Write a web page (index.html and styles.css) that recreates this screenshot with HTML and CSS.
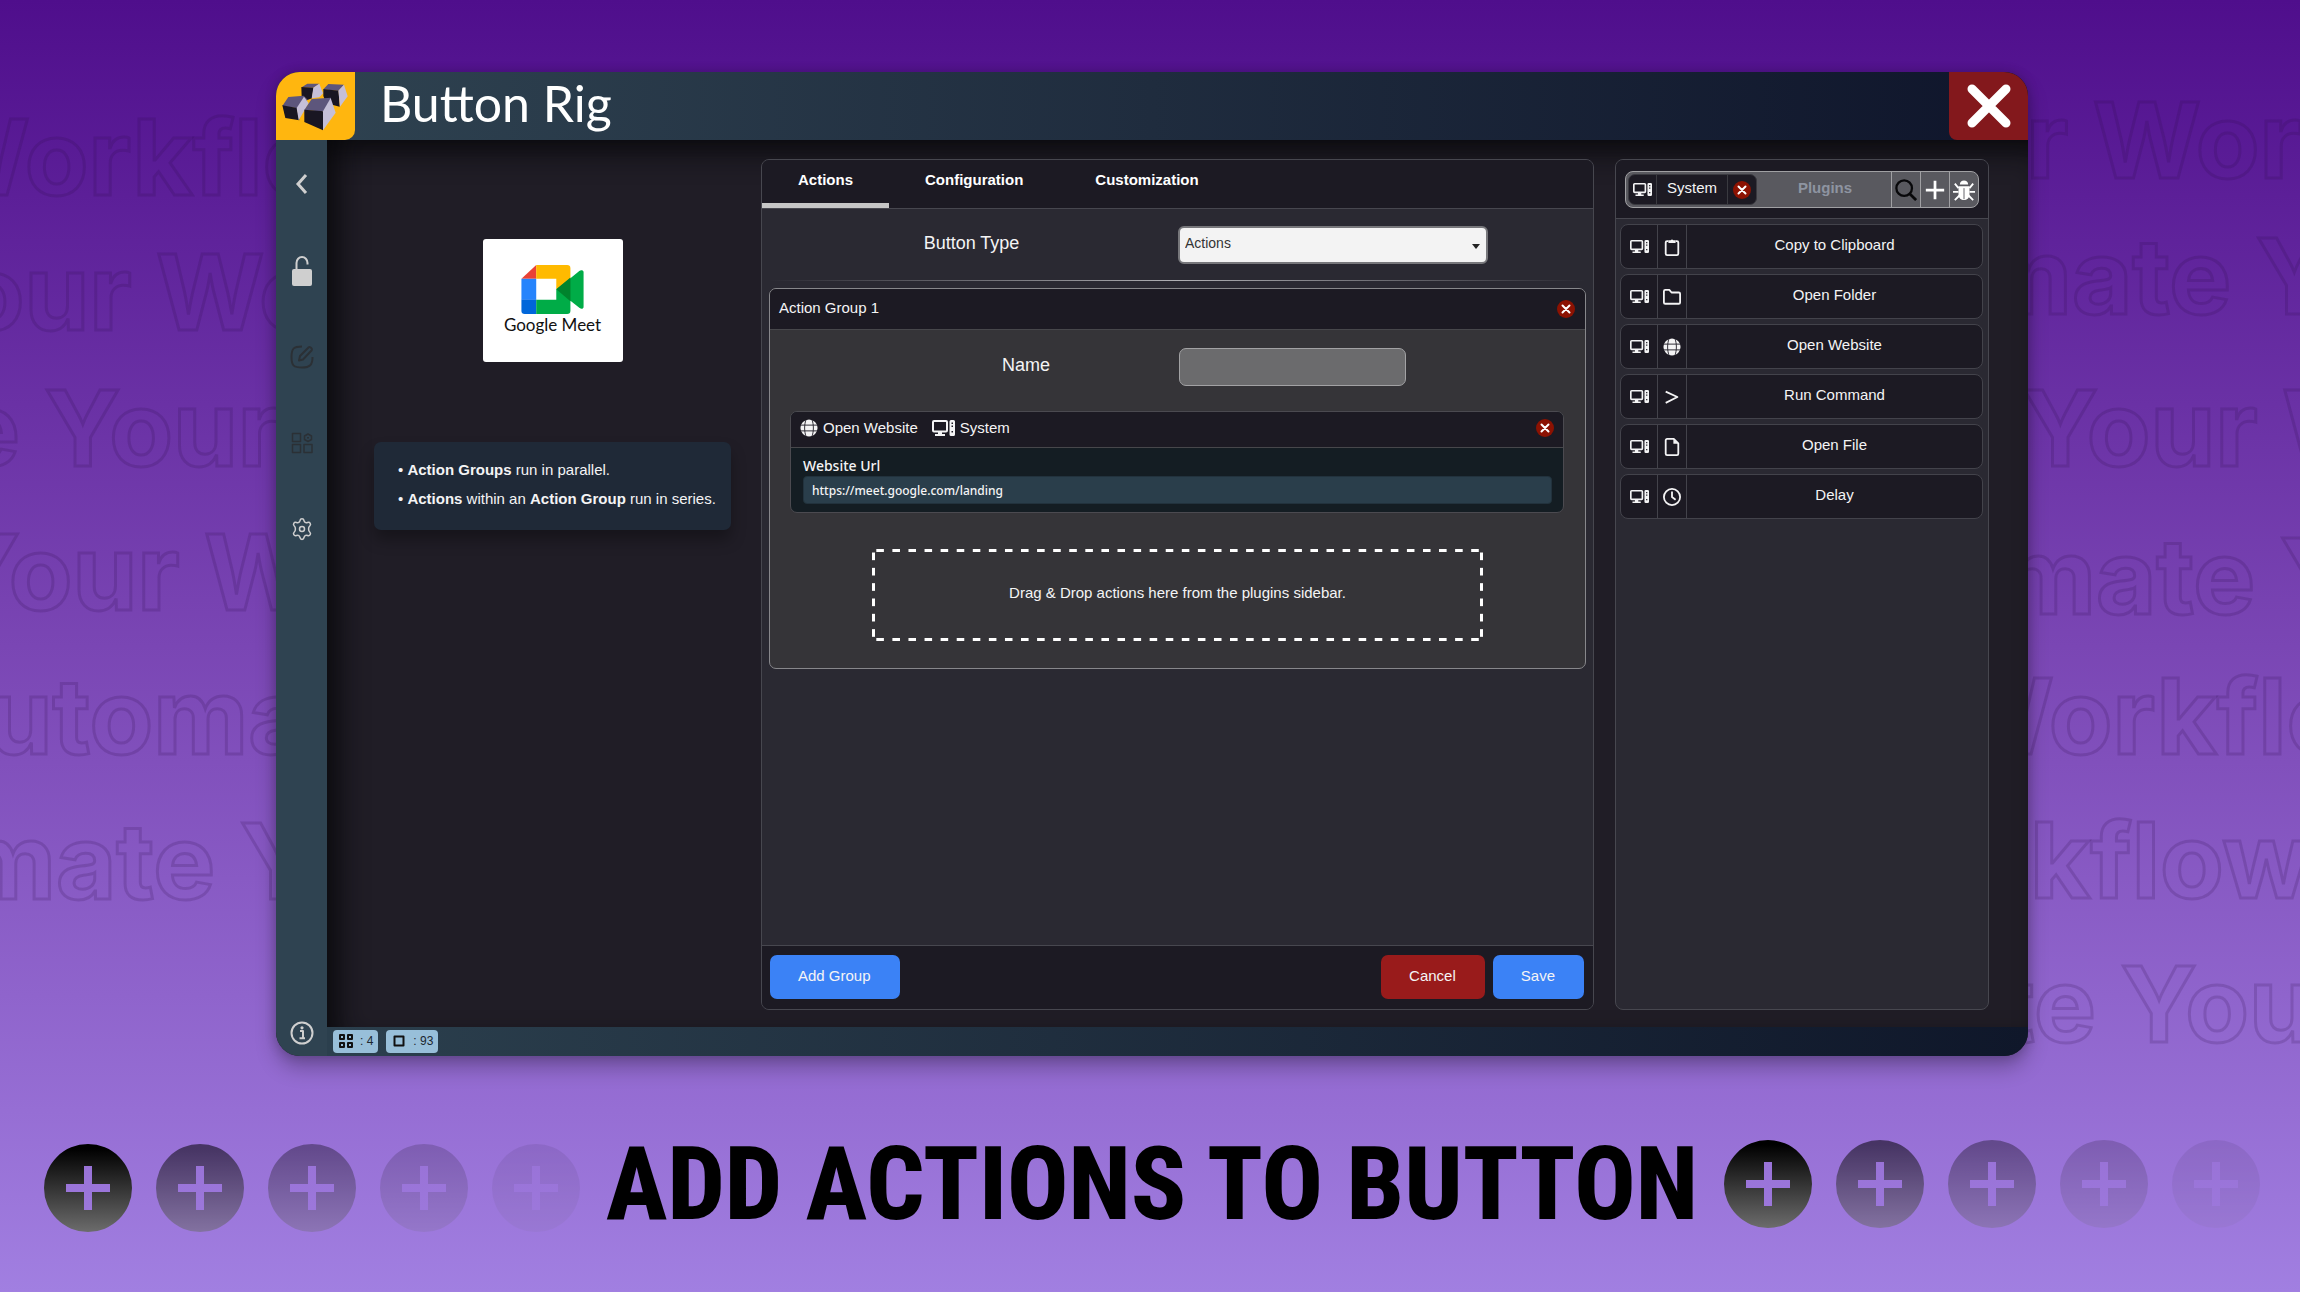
FILE: index.html
```html
<!DOCTYPE html>
<html lang="en">
<head>
<meta charset="utf-8">
<title>Button Rig</title>
<link rel="stylesheet" href="styles.css">
</head>
<body>
<svg class="sprite" aria-hidden="true">
  <symbol id="pc" viewBox="0 0 23 18">
    <rect x="1" y="2" width="14" height="10.500" rx="1" fill="none" stroke="currentColor" stroke-width="2"/>
    <path d="M6 12h4v3.500H6zM3 15h10v2H3z" fill="currentColor"/>
    <path fill-rule="evenodd" fill="currentColor" d="M19 1h2.500a1.500 1.500 0 0 1 1.500 1.500v13a1.500 1.500 0 0 1-1.500 1.500H19a1.500 1.500 0 0 1-1.500-1.500v-13A1.500 1.500 0 0 1 19 1zM19.500 3.500v1.500H21V3.500zM19.500 6.500V8H21V6.500zM19.500 12v1.500H21V12z"/>
  </symbol>
  <symbol id="globe" viewBox="0 0 20 20">
    <circle cx="10" cy="10" r="9.500" fill="currentColor"/>
    <path d="M0 6.800h20M0 13.200h20M7 0C4.500 6 4.500 14 7 20M13 0c2.500 6 2.500 14 0 20" fill="none" stroke="#1c1a23" stroke-width="1"/>
  </symbol>
  <symbol id="close" viewBox="0 0 18 18">
    <circle cx="9" cy="9" r="9" fill="#8c1202"/>
    <path d="M5.500 5.500l7 7M12.500 5.500l-7 7" stroke="#fff" stroke-width="2" stroke-linecap="round"/>
  </symbol>
  <symbol id="plusdot" viewBox="0 0 88 88">
    <linearGradient id="fade" x1="0" y1="0" x2="0" y2="1"><stop offset="0.050" stop-color="#000"/><stop offset="1" stop-color="#6c6c6c"/></linearGradient>
    <path fill="url(#fade)" fill-rule="evenodd" d="M44 0a44 44 0 1 1 0 88a44 44 0 1 1 0-88zM40 22v18H22v8h18v18h8V48h18v-8H48V22z"/>
  </symbol>
</svg>

<svg class="backdrop backdrop-left" aria-hidden="true">
  <text x="-78" y="195">Workflow</text>
  <text x="-104" y="330">Your Wo</text>
  <text x="-42" y="466">e Your</text>
  <text x="-56" y="610">Your W</text>
  <text x="-90" y="754">Automa</text>
  <text x="-39" y="899">mate Y</text>
</svg>
<svg class="backdrop backdrop-right" aria-hidden="true">
  <text x="26" y="178">r Work</text>
  <text x="-23" y="314">mate Y</text>
  <text x="22" y="466">Your W</text>
  <text x="1" y="614">mate Y</text>
  <text x="-54" y="754">Workflow</text>
  <text x="-14" y="898">rkflow</text>
  <text x="-3" y="1042">te Your</text>
</svg>

<div class="window">
  <header class="titlebar">
    <svg class="logo" viewBox="0 0 237 204" aria-hidden="true">
      <g transform="translate(-48 -66)">
        <path fill="#5d567c" d="M125 112l17-11h36l-18 12zM190 118l15-16 47 2-17 19z"/>
        <path fill="#191622" d="M124 111l37 2-5 32-20 7-11-12zM190 117l46 5 3 48-40-10-9-22z"/>
        <path fill="#c5bfd8" d="M160 113l18-12 11 29-11 12-23 3zM235 122l17-18 11 35-23 31z"/>
        <path fill="#5d567c" d="M67 168l18-27 46-4 12 12-32 26z"/>
        <path fill="#191622" d="M67 166l44 8 7 37-42-7z"/>
        <path fill="#c5bfd8" d="M110 174l22-34 14 20-30 51z"/>
        <path fill="#5d567c" d="M133 180l22-33 58-4-6 20-16 22z"/>
        <path fill="#191622" d="M133 179l58 5-2 57-56-25z"/>
        <path fill="#c5bfd8" d="M189 184l23-40 15 44-38 53z"/>
      </g>
    </svg>
    <h1>Button Rig</h1>
    <button class="window-close" aria-label="Close window"><svg viewBox="0 0 44 44"><path d="M5 5l34 34M39 5L5 39" stroke="#fff" stroke-width="9" stroke-linecap="round"/></svg></button>
  </header>

  <nav class="sidebar">
    <button aria-label="Back"><svg viewBox="0 0 24 24"><path d="M16 3l-8 9 8 9" class="line bold"/></svg></button>
    <button aria-label="Unlock"><svg class="tall" viewBox="0 0 22 32"><path d="M5.500 14V8a5.500 6 0 0 1 11 0v1.500" class="line"/><rect x="1" y="14" width="20" height="17" rx="2" fill="currentColor"/></svg></button>
    <button aria-label="Edit" disabled><svg viewBox="0 0 24 24"><path d="M12 1.500C4 1.500 1.500 3 1.500 12S4 22.500 12 22.500 22.500 20 22.500 12M9 15.500l1-4.500 8.500-8.500c1.500-1.500 4.500 1.500 3 3L13 14.500z" class="line"/></svg></button>
    <button aria-label="Widgets" disabled><svg viewBox="0 0 24 24"><path d="M2.500 2.500h8v8h-8zM2.500 13.500h8v8h-8zM14 13.500h8v8h-8zM18 3l3.500 2v3.500L18 10.500 14.500 8.500V5zM17 6.800h2" class="line thin"/></svg></button>
    <button aria-label="Settings"><svg viewBox="0 0 24 24"><path d="M10 3.500c.5-2.500 3.500-2.500 4 0 .5 2 1.500 2.600 3.500 2 2.500-.8 4 1.800 2.200 3.500-1.500 1.300-1.500 4.700 0 6 1.800 1.700.3 4.300-2.200 3.500-2-.6-3 0-3.500 2-.5 2.500-3.500 2.500-4 0-.5-2-1.500-2.600-3.500-2-2.500.8-4-1.800-2.200-3.500 1.500-1.300 1.500-4.700 0-6C2.500 7.300 4 4.700 6.500 5.500c2 .6 3 0 3.500-2z" class="line thin"/><circle cx="12" cy="12" r="2.500" class="line thin"/></svg></button>
    <button class="about" aria-label="About"><svg viewBox="0 0 24 24"><circle cx="12" cy="12" r="10.500" class="line"/><path d="M10 10h3v7M9.500 17.200h5.500" class="line"/><circle cx="12" cy="6.800" r="1.600" fill="currentColor"/></svg></button>
  </nav>

  <main class="workspace">
    <section class="preview">
      <div class="tile">
        <svg viewBox="0 0 189 149" aria-hidden="true">
          <path fill="#e94235" d="M0 42L45 0v42z"/><path fill="#2684fc" d="M0 42h45v64H0z"/>
          <path fill="#0066da" d="M0 106h45v43H10a10 10 0 0 1-10-10z"/>
          <path fill="#ffba00" d="M45 0h94a10 10 0 0 1 10 10v40l-43 24V42H45z"/>
          <path fill="#00ac47" d="M45 106h61V74l43-34 27-22c5-4 13-2 13 3v106c0 7-7 8-12 4l-28-22v30a10 10 0 0 1-10 10H45z"/>
          <path fill="#00832d" d="M106 74l43-36v72z"/>
        </svg>
        <span>Google Meet</span>
      </div>
      <ul class="tips">
        <li><b>Action Groups</b> run in parallel.</li>
        <li><b>Actions</b> within an <b>Action Group</b> run in series.</li>
      </ul>
    </section>

    <form class="panel editor">
      <div class="tabs">
        <button type="button" class="active">Actions</button>
        <button type="button">Configuration</button>
        <button type="button">Customization</button>
      </div>
      <div class="editor-body">
        <div class="field type-field">
          <label for="type">Button Type</label>
          <div class="select"><select id="type"><option>Actions</option></select><svg viewBox="0 0 8 6" aria-hidden="true"><path d="M0 1h8L4 6z"/></svg></div>
        </div>
        <hr>
        <section class="group">
          <header><h2>Action Group 1</h2><button type="button" class="remove" aria-label="Remove group"><svg><use href="#close"/></svg></button></header>
          <div class="field name-field"><label for="name">Name</label><input id="name" type="text"></div>
          <article class="action">
            <header>
              <svg class="globe"><use href="#globe"/></svg><span>Open Website</span>
              <svg class="pc"><use href="#pc"/></svg><span>System</span>
              <button type="button" class="remove" aria-label="Remove action"><svg><use href="#close"/></svg></button>
            </header>
            <div class="action-body"><label for="url">Website Url</label><input id="url" type="text" value="https://meet.google.com/landing"></div>
          </article>
          <p class="drop">Drag &amp; Drop actions here from the plugins sidebar.</p>
        </section>
      </div>
      <footer><button type="button">Add Group</button><button type="button" class="danger">Cancel</button><button type="button">Save</button></footer>
    </form>

    <aside class="panel plugins">
      <div class="filter">
        <div class="search">
          <div class="chip"><span class="cell"><svg class="pc"><use href="#pc"/></svg></span><span class="chip-name">System</span><button class="remove" aria-label="Clear System filter"><svg><use href="#close"/></svg></button></div>
          <input type="text" placeholder="Plugins" aria-label="Plugins">
          <button aria-label="Search"><svg viewBox="0 0 24 24"><circle cx="10" cy="10" r="8.500" fill="none" stroke="#08080a" stroke-width="2.500"/><path d="M16 16l7 7" stroke="#08080a" stroke-width="3"/></svg></button>
          <button aria-label="Add plugin"><svg viewBox="0 0 24 24"><path d="M12 2v20M2 12h20" stroke="#fff" stroke-width="3"/></svg></button>
          <button aria-label="Debug"><svg viewBox="0 0 24 24"><path d="M7.500 6a4.500 4.500 0 0 1 9 0zM6 8h12v9c0 8-12 8-12 0z" fill="#fff"/><path d="M6 10L2 5M18 10l4-5M6 14H0M18 14h6M7 18l-5 5M17 18l5 5" stroke="#fff" stroke-width="2"/><path d="M12 10v12" stroke="#59595f"/></svg></button>
        </div>
      </div>
      <ul class="plugin-list">
        <li><span><svg class="pc"><use href="#pc"/></svg></span><span><svg viewBox="0 0 20 20"><path d="M6 3.500H4.500A1.500 1.500 0 0 0 3 5v12.500A1.500 1.500 0 0 0 4.500 19h11a1.500 1.500 0 0 0 1.500-1.500V5a1.500 1.500 0 0 0-1.500-1.500H14" class="line"/><path d="M6 5.500V2.500h2.500a2 2 0 0 1 3 0H14v3z" fill="currentColor"/></svg></span><span>Copy to Clipboard</span></li>
        <li><span><svg class="pc"><use href="#pc"/></svg></span><span><svg viewBox="0 0 20 20"><path d="M1 16V3.500A1.500 1.500 0 0 1 2.500 2H7l2.500 3h8A1.500 1.500 0 0 1 19 6.500V16a1.500 1.500 0 0 1-1.500 1.500h-15A1.500 1.500 0 0 1 1 16z" class="line"/></svg></span><span>Open Folder</span></li>
        <li><span><svg class="pc"><use href="#pc"/></svg></span><span><svg><use href="#globe"/></svg></span><span>Open Website</span></li>
        <li><span><svg class="pc"><use href="#pc"/></svg></span><span><svg viewBox="0 0 20 20"><path d="M3 4l13 6-13 6.500" class="line"/></svg></span><span>Run Command</span></li>
        <li><span><svg class="pc"><use href="#pc"/></svg></span><span><svg viewBox="0 0 20 20"><path d="M12 1H4.500A1.500 1.500 0 0 0 3 2.500v15A1.500 1.500 0 0 0 4.500 19h11a1.500 1.500 0 0 0 1.500-1.500V6z" class="line"/><path d="M11.500 1l5.500 5.500h-5.500z" fill="currentColor"/></svg></span><span>Open File</span></li>
        <li><span><svg class="pc"><use href="#pc"/></svg></span><span><svg viewBox="0 0 20 20"><circle cx="10" cy="10" r="9" class="line"/><path d="M10 4v6l4 3" class="line"/></svg></span><span>Delay</span></li>
      </ul>
    </aside>
  </main>

  <footer class="statusbar">
    <span class="stat"><svg viewBox="0 0 14 14"><path d="M1 1h4v4H1zM9 1h4v4H9zM1 9h4v4H1zM9 9h4v4H9z" class="line"/></svg> : 4</span>
    <span class="stat"><svg viewBox="0 0 14 14"><path d="M2.500 2.500h9v9h-9z" class="line"/></svg> : 93</span>
  </footer>
</div>

<footer class="banner">
  <div class="dots lowered" aria-hidden="true"><svg><use href="#plusdot"/></svg><svg><use href="#plusdot"/></svg><svg><use href="#plusdot"/></svg><svg><use href="#plusdot"/></svg><svg><use href="#plusdot"/></svg></div>
  <p class="headline">ADD ACTIONS TO BUTTON</p>
  <div class="dots" aria-hidden="true"><svg><use href="#plusdot"/></svg><svg><use href="#plusdot"/></svg><svg><use href="#plusdot"/></svg><svg><use href="#plusdot"/></svg><svg><use href="#plusdot"/></svg></div>
</footer>
</body>
</html>
```
FILE: styles.css
```css
* { box-sizing: border-box; }
body {
  margin: 0;
  min-height: 100vh;
  display: flex;
  flex-direction: column;
  position: relative;
  overflow-x: hidden;
  background: linear-gradient(#4f0e8c, #7a46b4 50%, #966ed4 86%, #a17fe1);
  color: #f4f4f5;
  font: 15px/20px "Liberation Sans", Arial, sans-serif;
}
button, input, select { font: inherit; color: inherit; border: 0; margin: 0; padding: 0; background: none; min-width: 0; }
h1, h2, p, ul { margin: 0; padding: 0; font-weight: 400; list-style: none; }
svg { display: block; flex: none; }
.sprite { position: absolute; width: 0; height: 0; }
.line { fill: none; stroke: currentColor; stroke-width: 2; stroke-linejoin: round; }
.line.bold { stroke-width: 3; stroke-linejoin: miter; }
.line.thin { stroke-width: 1.500; }

.backdrop { position: absolute; top: 0; width: 300px; height: 1080px; overflow: hidden; }
.backdrop-left { left: 0; }
.backdrop-right { right: 0; }
.backdrop text { font: 700 104px Inter, sans-serif; fill: none; stroke: #2a0a4a; stroke-opacity: .18; stroke-width: 3; }

.window {
  position: relative;
  flex: 1;
  margin: 72px 272px 0 276px;
  display: grid;
  grid-template: 68px 1fr 29px / 51px minmax(0, 1fr);
  border-radius: 24px;
  overflow: hidden;
  background: #201d26;
  box-shadow: 0 12px 20px rgba(0, 0, 0, .25), 0 0 12px rgba(0, 0, 0, .2);
}
.titlebar { grid-column: 1 / 3; display: flex; align-items: stretch; background: linear-gradient(90deg, #2f4351, #0f152b); }
.logo { width: 79px; height: 68px; background: #ffb60f; border-radius: 0 0 10px 0; }
.titlebar h1 { flex: 1; padding-left: 25px; font: 50px/62px Lato, sans-serif; color: #fff; }
.window-close { width: 79px; background: #83181c; border-radius: 0 0 0 8px; display: grid; place-items: center; }
.window-close svg { width: 44px; height: 44px; }

.sidebar { grid-row: 2 / 4; background: #2f4351; color: #cfcfcf; display: flex; flex-direction: column; align-items: center; }
.sidebar button { height: 86px; width: 50px; display: grid; place-items: center; }
.sidebar button:first-child { height: 88px; }
.sidebar button:disabled { color: #2b3035; }
.sidebar svg { width: 24px; height: 24px; }
.sidebar .tall { width: 22px; height: 32px; }
.sidebar .about { margin-top: auto; height: 46px; }

.workspace {
  display: grid;
  grid-template-columns: minmax(0, 413fr) minmax(0, 833fr) minmax(0, 374fr);
  gap: 21px;
  padding: 19px 39px 17px 0;
  box-shadow: inset 28px 0 28px -16px rgba(8, 8, 10, .8), inset 0 28px 28px -16px rgba(8, 8, 10, .8);
}
.preview { padding: 80px 9px 0 47px; display: flex; flex-direction: column; align-items: center; gap: 80px; }
.tile { width: 140px; height: 123px; border-radius: 3px; background: #fff; color: #111; display: flex; flex-direction: column; align-items: center; padding-top: 26px; font: 17px/22px Lato, sans-serif; }
.tile svg { width: 63px; height: 49px; }
.tips { width: 100%; height: 88px; padding: 13px 24px; border-radius: 7px; background: #1f2937; line-height: 29px; white-space: nowrap; box-shadow: 0 10px 15px rgba(0, 0, 0, .3); }
.tips li::before { content: "• "; }

.panel { border: 1px solid #47474f; border-radius: 8px; background: #2a2932; overflow: hidden; display: flex; flex-direction: column; }
.tabs { flex: none; height: 49px; background: #1c1a23; border-bottom: 1px solid #47474f; display: flex; }
.tabs button { padding: 0 36px 3px; font-weight: 700; color: #fff; border-bottom: 5px solid transparent; }
.tabs .active { border-color: #c6c6c6; }
.editor-body { flex: 1; padding: 0 7px; }
.field { display: grid; align-items: center; font-size: 18px; text-align: center; }
.field label { padding-bottom: 4px; }
.type-field { height: 71px; grid-template-columns: 408fr 309fr 98fr; }
.type-field label { padding-right: 4px; }
.select { position: relative; height: 38px; }
.select select { width: 100%; height: 38px; appearance: none; padding: 0 5px 4px; border: 2px solid #77777b; border-radius: 6px; background: #f3f3f3; color: #333; font-size: 14px; }
.select svg { position: absolute; right: 8px; top: 17px; width: 8px; height: 6px; fill: #222; }
hr { height: 1px; margin: 0; border: 0; background: linear-gradient(90deg, transparent, #b0b0b4, transparent); }
.group { margin-top: 7px; height: 381px; border: 1px solid #87878b; border-radius: 7px; background: #353438; overflow: hidden; }
.group > header { height: 41px; padding: 0 10px 0 9px; display: flex; align-items: center; justify-content: space-between; background: #1c1a23; border-bottom: 1px solid #47474b; }
h2 { font-size: 15px; padding-bottom: 3px; }
.remove, .remove svg { width: 18px; height: 18px; flex: none; }
.name-field { height: 73px; grid-template-columns: 409fr 227fr 179fr; }
.name-field label { padding-left: 103px; }
.field input { height: 38px; padding: 0 8px; border: 1px solid #a2a2a4; border-radius: 7px; background: #6b6b6d; }
.action { margin: 8px 21px 0 20px; border: 1px solid #4b4a50; border-radius: 7px; overflow: hidden; background: #141d23; }
.action header { height: 36px; padding: 0 9px 3px; display: flex; align-items: center; gap: 5px; background: #1c1a23; border-bottom: 1px solid #47474b; }
.action .globe { width: 18px; height: 18px; }
.action .pc { width: 23px; height: 18px; margin-left: 9px; }
.action .remove { margin-left: auto; }
.action-body { padding: 7px 11px 8px 12px; font-family: "Noto Sans", sans-serif; font-weight: 500; }
.action-body label { display: block; line-height: 21px; font-size: 14px; }
.action-body input { width: 100%; height: 28px; padding: 0 8px; border-radius: 4px; border: 1px solid #22323d; background: #2a3e4b; font-size: 12px; }
.drop {
  --dash: #fff 25%, transparent 25% 75%, #fff 75%;
  height: 92px;
  margin: 36px 102px 0 102px;
  text-align: center;
  line-height: 88px;
  background:
    linear-gradient(90deg, var(--dash)) top / 16px 3px round no-repeat,
    linear-gradient(90deg, var(--dash)) bottom / 16px 3px round no-repeat,
    linear-gradient(var(--dash)) left / 3px 16px no-repeat round,
    linear-gradient(var(--dash)) right / 3px 16px no-repeat round;
}
.editor footer { flex: none; height: 64px; padding: 9px 9px 10px 8px; display: flex; gap: 8px; background: #1c1a23; border-top: 1px solid #47474f; }
.editor footer button { height: 44px; padding: 0 29px 2px 28px; border-radius: 7px; background: #3b82f6; }
.editor footer .danger { margin-left: auto; background: #991b1b; }

.filter { height: 59px; padding: 11px 9px; background: #1c1a23; border-bottom: 1px solid #47474f; }
.search { height: 37px; display: flex; border: 1px solid #a0a0a3; border-radius: 8px; background: #59595f; overflow: hidden; }
.search > button { width: 29px; flex: none; border-left: 1px solid #a0a0a3; display: grid; place-items: center; }
.search > button svg { width: 22px; height: 22px; }
.search > input { flex: 1; text-align: center; font-weight: 700; padding-bottom: 3px; }
.search > input::placeholder { color: #8e94a1; opacity: 1; }
.chip { flex: none; width: 129px; margin: 2px; display: flex; align-items: center; border: 1px solid #3a3a40; border-radius: 7px; background: #1c1a23; }
.cell { width: 27px; display: grid; place-items: center; }
.chip-name { flex: 1; height: 100%; line-height: 25px; text-align: center; border: solid #3a3a40; border-width: 0 1px; }
.chip .remove { margin: 0 5px; }
.plugins .pc { width: 19px; height: 15px; }
.plugin-list { padding: 5px 5px 5px 4px; display: grid; gap: 5px; }
.plugin-list li { height: 45px; display: grid; grid-template-columns: 36px 29px 1fr; border: 1px solid #43434b; border-radius: 8px; background: #1c1a23; }
.plugin-list span { display: grid; place-items: center; border-left: 1px solid #43434b; }
.plugin-list span:first-child { border: 0; }
.plugin-list span:last-child { padding-bottom: 3px; }
.plugin-list span:nth-child(2) svg { width: 18px; height: 18px; }

.statusbar { background: linear-gradient(90deg, #2b3f4d, #0f172a); display: flex; align-items: center; gap: 8px; padding: 0 6px 1px; }
.stat { display: flex; align-items: center; gap: 7px; height: 23px; padding: 0 5px 0 6px; border-radius: 4px; background: #98bfd9; color: #1c2730; font-size: 12px; }
.stat svg { width: 14px; height: 14px; color: #111; }

.banner { height: 236px; padding: 20px 40px 0 44px; display: flex; align-items: center; justify-content: space-between; }
.dots { display: flex; gap: 24px; }
.dots.lowered { margin-top: 8px; }
.dots svg { width: 88px; height: 88px; }
.dots svg:nth-child(2) { opacity: .53; }
.dots svg:nth-child(3) { opacity: .34; }
.dots svg:nth-child(4) { opacity: .16; }
.dots svg:nth-child(5) { opacity: .07; }
.headline { font: 800 102px/120px "Roboto Condensed", Roboto, sans-serif; color: #000; white-space: nowrap; }
```
